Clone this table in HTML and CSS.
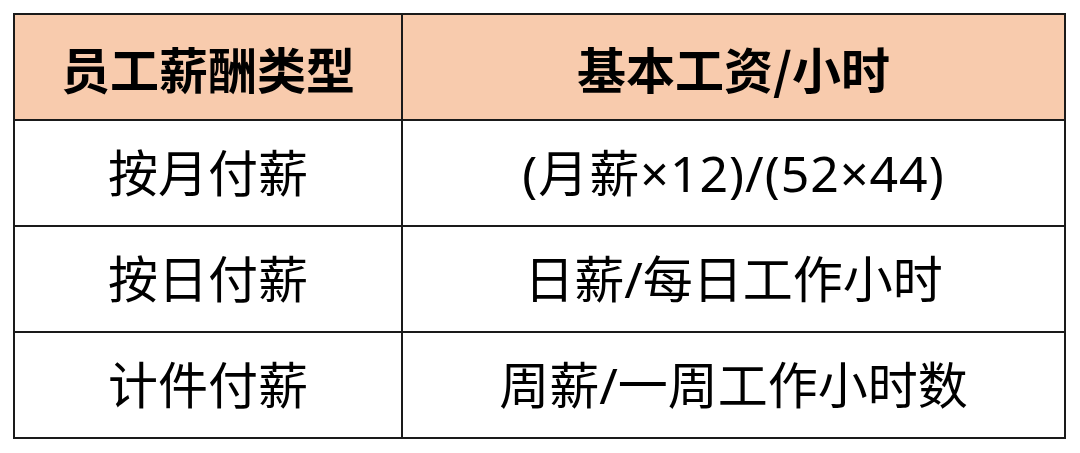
FILE: index.html
```html
<!DOCTYPE html>
<html lang="zh-CN">
<head>
<meta charset="utf-8">
<link rel="stylesheet" href="styles.css">
</head>
<body>
<table class="pay">
  <thead>
    <tr><th class="c1">员工薪酬类型</th><th>基本工资/小时</th></tr>
  </thead>
  <tbody>
    <tr><td class="c1">按月付薪</td><td class="formula">(月薪×12)/(52×44)</td></tr>
    <tr><td class="c1">按日付薪</td><td>日薪/每日工作小时</td></tr>
    <tr><td class="c1">计件付薪</td><td>周薪/一周工作小时数</td></tr>
  </tbody>
</table>
</body>
</html>
```

FILE: styles.css
```css
html, body {
  margin: 0;
  padding: 0;
  background: #ffffff;
}
body {
  padding: 13px 0 0 13px;
  font-family: "Noto Sans", "Noto Sans CJK SC", sans-serif;
  color: #000;
}
.pay {
  border-collapse: collapse;
  width: 1053px;
  table-layout: fixed;
}
.pay th, .pay td {
  border: 2px solid #1a1a1a;
  height: 104px;
  padding: 0;
  text-align: center;
  vertical-align: middle;
  font-size: 50px;
  line-height: 1;
}
.pay th {
  background: #f8cbad;
  font-weight: 700;
  font-family: "Noto Sans CJK SC", sans-serif;
  font-size: 49px;
}
.pay td {
  font-weight: 400;
}
.pay .formula {
  letter-spacing: 1px;
}
.pay .c1 {
  width: 386px;
}
```
